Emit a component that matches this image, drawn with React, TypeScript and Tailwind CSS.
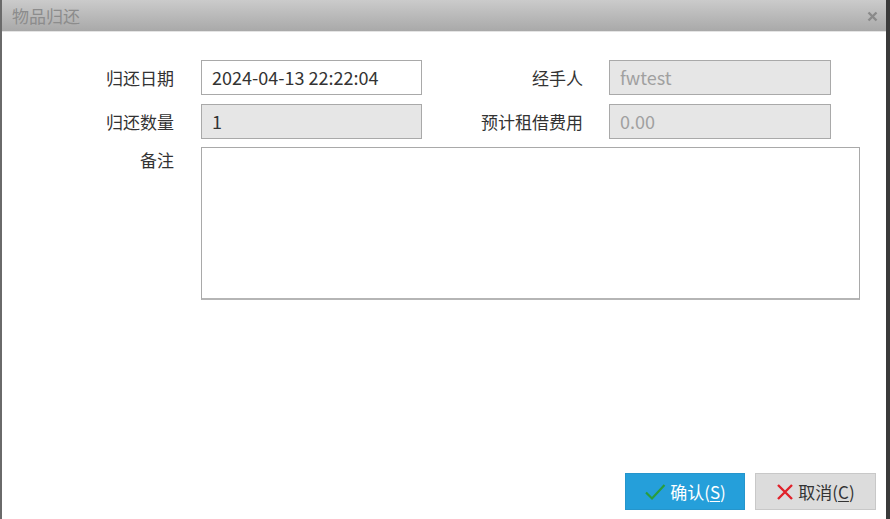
import React from "react";

const font = { fontFamily: '"Noto Sans CJK SC", "Noto Sans", sans-serif' };

function Field({
  value,
  readOnly,
  dim,
  width,
}: {
  value: string;
  readOnly?: boolean;
  dim?: boolean;
  width: string;
}) {
  return (
    <div
      className={
        "h-[35px] border border-[#a9a9a9] flex items-center px-[10px] text-[18px] " +
        width +
        " " +
        (readOnly ? "bg-[#e6e6e6] " : "bg-white ") +
        (dim ? "text-[#a0a0a0]" : "text-[#333]")
      }
    >
      {value}
    </div>
  );
}

export default function App() {
  return (
    <div
      className="w-[890px] h-[519px] bg-white flex flex-col border-l-2 border-l-[#6a6a6a] border-r-4 border-r-[#3a3a3a] overflow-hidden"
      style={font}
    >
      <div className="h-[32px] shrink-0 bg-gradient-to-b from-[#cbcbcb] to-[#a9a9a9] border-b border-b-[#e4e4e4] flex items-center justify-between pl-[10px] pr-[8px]">
        <span className="text-[17px] text-[#8c8c8c]">物品归还</span>
        <svg width="11" height="11" viewBox="0 0 11 11" className="mt-[1px]">
          <path d="M1.5 1.5 L9.5 9.5 M9.5 1.5 L1.5 9.5" stroke="#8a8a8a" strokeWidth="2.4" />
        </svg>
      </div>

      <div className="flex flex-col pt-[28px] text-[17px] text-[#333]">
        <div className="flex items-center h-[35px]">
          <div className="w-[172px] text-right">归还日期</div>
          <div className="w-[27px]" />
          <Field value="2024-04-13 22:22:04" width="w-[221px]" />
          <div className="w-[161px] text-right">经手人</div>
          <div className="w-[26px]" />
          <Field value="fwtest" readOnly dim width="w-[222px]" />
        </div>
        <div className="flex items-center h-[35px] mt-[9px]">
          <div className="w-[172px] text-right">归还数量</div>
          <div className="w-[27px]" />
          <Field value="1" readOnly width="w-[221px]" />
          <div className="w-[161px] text-right">预计租借费用</div>
          <div className="w-[26px]" />
          <Field value="0.00" readOnly dim width="w-[222px]" />
        </div>
        <div className="flex items-start mt-[8px]">
          <div className="w-[172px] text-right">备注</div>
          <div className="w-[27px]" />
          <div className="w-[659px] h-[153px] border border-[#a9a9a9] border-b-2 border-b-[#b5b5b5] bg-white" />
        </div>
      </div>

      <div className="flex-1" />

      <div className="flex justify-end gap-[10px] pr-[10px] pb-[9px]">
        <button className="w-[120px] h-[37px] bg-[#259fda] border border-[#2595cc] text-white text-[17px] flex items-center justify-center gap-[4px]">
          <svg width="22" height="18" viewBox="0 0 22 18">
            <path d="M2 9.5 L8 15.5 L20.5 2" fill="none" stroke="#2a9d3c" strokeWidth="2.2" />
          </svg>
          <span>
            确认(<span className="underline underline-offset-2">S</span>)
          </span>
        </button>
        <button className="w-[121px] h-[37px] bg-[#dcdcdc] border border-[#c8c8c8] text-[#333] text-[17px] flex items-center justify-center gap-[4px]">
          <svg width="18" height="18" viewBox="0 0 18 18">
            <path d="M2 2 L16 16 M16 2 L2 16" fill="none" stroke="#e0222a" strokeWidth="2.4" />
          </svg>
          <span>
            取消(<span className="underline underline-offset-2">C</span>)
          </span>
        </button>
      </div>
    </div>
  );
}
